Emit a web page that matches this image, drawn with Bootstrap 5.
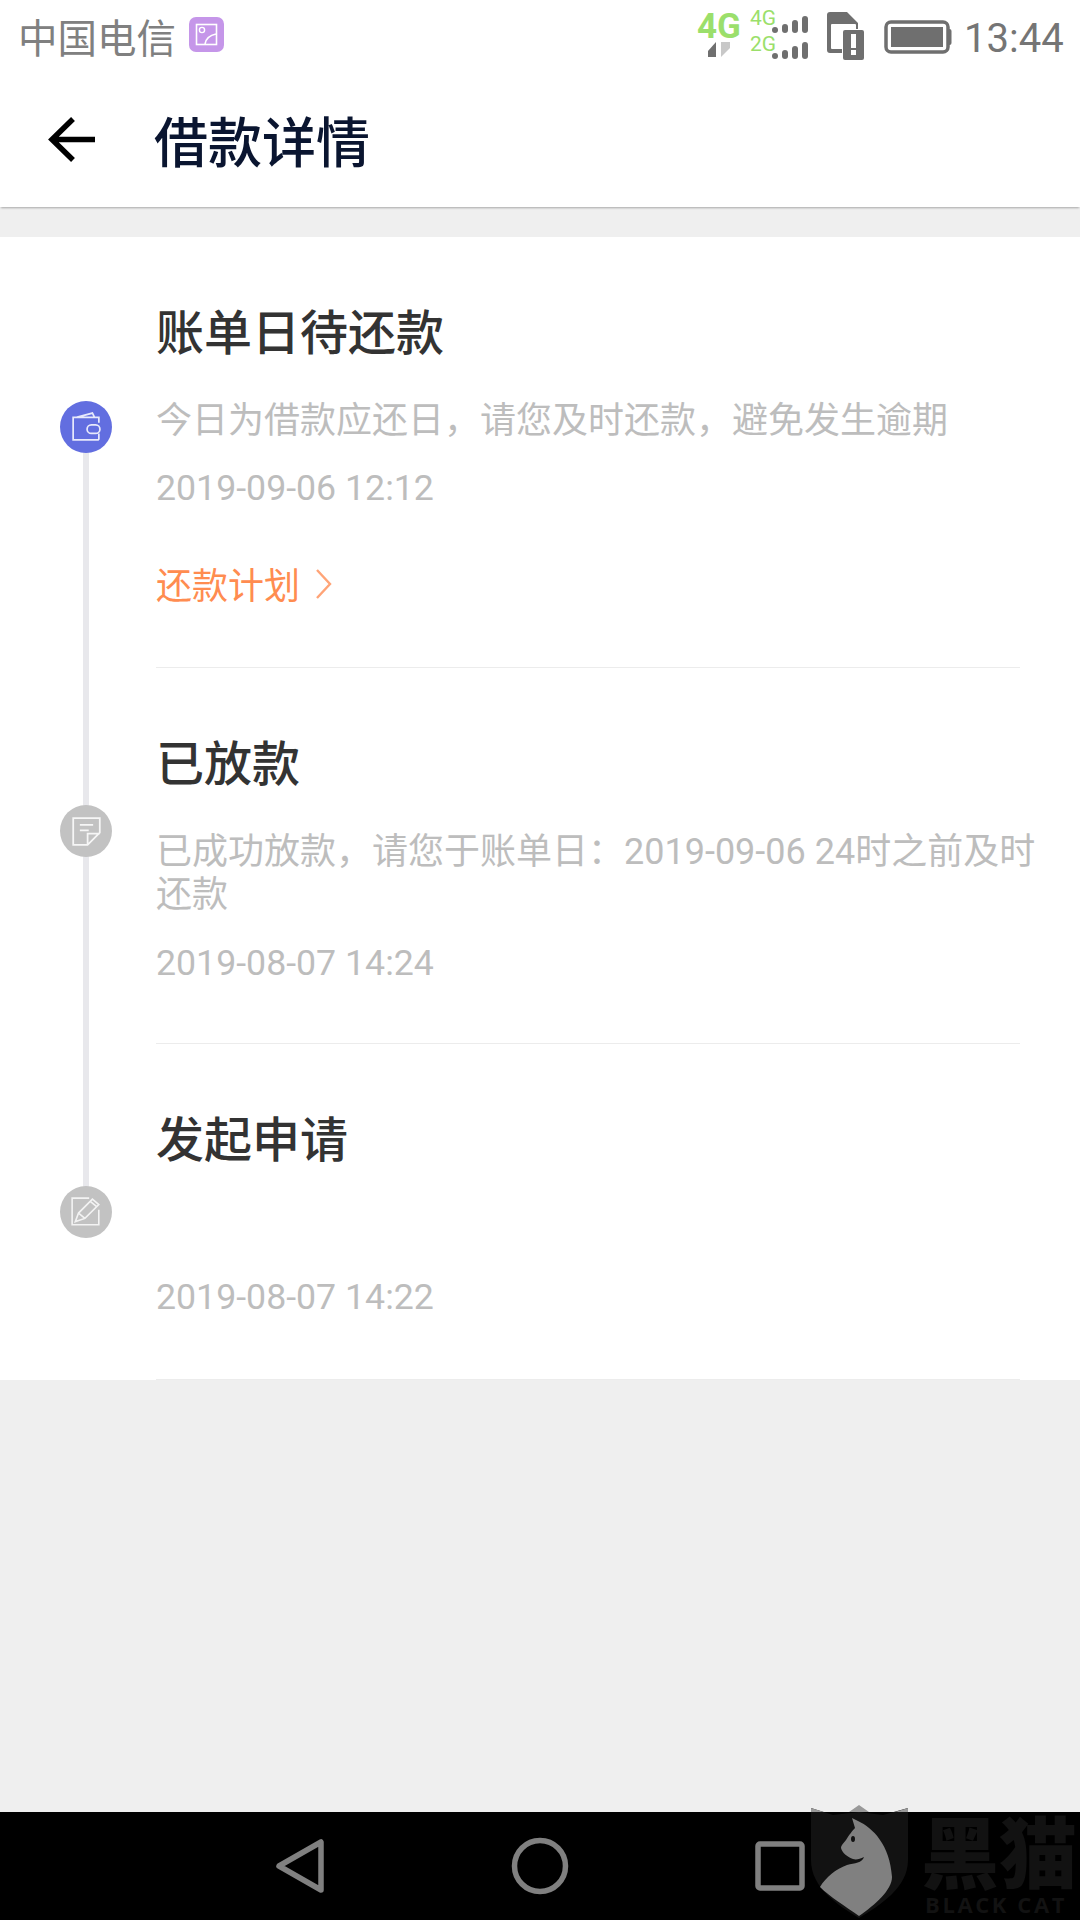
<!DOCTYPE html>
<html lang="zh-CN">
<head>
<meta charset="UTF-8">
<title>借款详情</title>
<link href="https://cdn.jsdelivr.net/npm/bootstrap@5.3.0/dist/css/bootstrap.min.css" rel="stylesheet">
<style>
html, body { background: #efefef; }
body { font-family: "Noto Sans CJK SC", "Noto Sans", sans-serif; }
.phone { width: 1080px; height: 1920px; overflow: hidden; }
.status-bar { height: 72px; padding-left: 18px; color: #808080; font-size: 39.5px; line-height: 72px; }
.carrier-text { white-space: nowrap; }
.note-badge { width: 35px; height: 35px; margin-left: 13px; margin-bottom: 4px; }
.status-icons { width: 400px; height: 72px; }
.clock { font-family: Roboto, sans-serif; font-size: 40px; fill: #757575; }
.net-big { font-family: Roboto, sans-serif; font-weight: 700; font-size: 35px; fill: #9bdf6b; }
.net-small { font-family: Roboto, sans-serif; font-size: 21px; fill: #9bdf6b; }
.app-bar { height: 135px; box-shadow: 0 2px 2px -1px rgba(0,0,0,.3); position: relative; }
.back-icon { width: 48px; height: 48px; margin-left: 48px; }
.page-title { font-size: 54px; line-height: 70px; color: #0a1530; margin: 0 0 0 58px; font-weight: 500; }
.timeline-box { margin-top: 30px; }
.step-row { position: relative; }
.rail-col { width: 156px; flex: none; position: relative; }
.rail-line { position: absolute; left: 83px; width: 6px; background: #e8e8ec; }
.step-dot { position: absolute; left: 60px; width: 52px; height: 52px; border-radius: 50%; background: #c2c2c2; display: flex; align-items: center; justify-content: center; }
.step-dot.is-active { background: #626ee0; }
.step-body { flex: 1; margin-right: 60px; padding: 60px 0 62px; border-bottom: 1px solid #ececec; min-width: 0; }
.step-body.is-plain { padding-bottom: 58px; }
.step-body.is-last { padding-bottom: 60px; }
.step-title { font-size: 48px; line-height: 64px; color: #333; margin: 0 0 39px; font-weight: 500; }
.step-desc { font-family: Roboto, "Noto Sans CJK SC", sans-serif; font-size: 36px; line-height: 43px; color: #bdbdbd; margin: 0 -36px 24px 0; min-height: 43px; }
.is-plain .step-desc { margin-bottom: 25px; }
.is-last .step-desc { margin-bottom: 26px; }
.step-date { font-family: Roboto, sans-serif; font-size: 35.7px; line-height: 43px; color: #bdbdbd; }
.step-link { font-size: 36px; line-height: 43px; color: #ff8c50; margin-top: 52px; }
.step-link svg { margin-left: 15px; }
.nav-strip { height: 108px; background: #000; position: relative; }
.nav-svg { position: absolute; left: 0; top: 0; overflow: visible; }
.mark-cn { position: absolute; left: 921px; top: 4px; height: 66px; font-weight: 900; font-size: 78px; line-height: 66px; color: #121212; white-space: nowrap; }
.mark-en { position: absolute; left: 925px; top: 82px; height: 20px; font-family: "Open Sans", sans-serif; font-weight: 700; font-size: 22px; line-height: 20px; letter-spacing: 2.6px; color: #121212; white-space: nowrap; }
</style>
</head>
<body>
<div class="phone d-flex flex-column">

  <div class="status-bar bg-white d-flex align-items-center">
    <span class="carrier-text">中国电信</span>
    <svg class="note-badge" viewBox="0 0 35 35">
      <rect width="35" height="35" rx="7" fill="#c596e9"/>
      <rect x="7.5" y="7.5" width="20" height="20" fill="none" stroke="#fff" stroke-width="1.6"/>
      <circle cx="13" cy="13" r="2.6" fill="none" stroke="#fff" stroke-width="1.4"/>
      <path d="M16 27 C17 21 22 18 27 17" fill="none" stroke="#fff" stroke-width="1.6"/>
    </svg>
    <svg class="status-icons ms-auto flex-shrink-0" viewBox="680 0 400 72">
      <text class="net-big" x="697" y="38">4G</text>
      <path d="M716 42 V57 H708 V51 Z" fill="#6f6f6f"/>
      <path d="M721 42 V57 L730 48 V42 Z" fill="#c8c8c8"/>
      <text class="net-small" x="750" y="25">4G</text>
      <text class="net-small" x="750" y="51">2G</text>
      <g fill="#6f6f6f">
        <circle cx="775" cy="30" r="3"/><rect x="782" y="24" width="6" height="9" rx="3"/><rect x="792" y="20" width="6" height="13" rx="3"/><rect x="802" y="16" width="6" height="17" rx="3"/>
        <circle cx="775" cy="56" r="3"/><rect x="782" y="50" width="6" height="9" rx="3"/><rect x="792" y="46" width="6" height="13" rx="3"/><rect x="802" y="42" width="6" height="17" rx="3"/>
      </g>
      <path d="M830 12 H847 L858 23 V34 H846 V53 H830 A3 3 0 0 1 827 50 V15 A3 3 0 0 1 830 12 Z" fill="#6f6f6f"/>
      <rect x="831" y="24" width="25" height="25" rx="1" fill="#fff"/>
      <rect x="842" y="29" width="23" height="32" fill="#fff"/>
      <rect x="843" y="30" width="21" height="30" rx="2" fill="#6f6f6f"/>
      <rect x="851" y="34" width="5" height="14" fill="#fff"/>
      <rect x="851" y="50" width="5" height="5" fill="#fff"/>
      <rect x="886" y="22" width="62" height="30" rx="5" fill="none" stroke="#6f6f6f" stroke-width="3.5"/>
      <rect x="891" y="27" width="52" height="20" fill="#6f6f6f"/>
      <path d="M949 29 H949.5 A2 2 0 0 1 951.5 31 V43 A2 2 0 0 1 949.5 45 H949 Z" fill="#6f6f6f"/>
      <text class="clock" x="964" y="52">13:44</text>
    </svg>
  </div>

  <div class="app-bar bg-white d-flex align-items-center">
    <svg class="back-icon" viewBox="0 0 48 48">
      <path d="M47 23.5 H4 M25 3 L4 23.5 L25 44" fill="none" stroke="#000" stroke-width="5.5"/>
    </svg>
    <h1 class="page-title">借款详情</h1>
  </div>

  <div class="timeline-box bg-white">

    <div class="step-row d-flex">
      <div class="rail-col">
        <div class="rail-line" style="top:190px;bottom:0"></div>
        <div class="step-dot is-active" style="top:164px">
          <svg width="30" height="30" viewBox="0 0 28 28" fill="none" stroke="#fff" stroke-opacity=".85" stroke-width="1.6">
            <path d="M26 26 H2 V5 H26 V10 M5 5 L20 1 L22 5"/>
            <rect x="15" y="12" width="12" height="8" rx="4"/>
            <path d="M26 20 V26"/>
          </svg>
        </div>
      </div>
      <div class="step-body">
        <h2 class="step-title">账单日待还款</h2>
        <p class="step-desc">今日为借款应还日&#65292;请您及时还款&#65292;避免发生逾期</p>
        <div class="step-date">2019-09-06 12:12</div>
        <div class="step-link d-flex align-items-center">还款计划
          <svg width="17" height="32" viewBox="0 0 17 32"><path d="M2 2 L15 16 L2 30" fill="none" stroke="#ffa477" stroke-width="2.4"/></svg>
        </div>
      </div>
    </div>

    <div class="step-row d-flex">
      <div class="rail-col">
        <div class="rail-line" style="top:0;bottom:0"></div>
        <div class="step-dot" style="top:137px">
          <svg width="31" height="31" viewBox="0 0 28 28" fill="none" stroke="#fff" stroke-opacity=".85" stroke-width="1.6">
            <path d="M15 26 H2 V2 H26 V15 L15 26 Z M15 26 V16 H26"/>
            <path d="M8 8 H20 M8 13 H16"/>
          </svg>
        </div>
      </div>
      <div class="step-body is-plain">
        <h2 class="step-title">已放款</h2>
        <p class="step-desc">已成功放款&#65292;请您于账单日&#65306;2019-09-06 24时之前及时还款</p>
        <div class="step-date">2019-08-07 14:24</div>
      </div>
    </div>

    <div class="step-row d-flex">
      <div class="rail-col">
        <div class="rail-line" style="top:0;height:168px"></div>
        <div class="step-dot" style="top:142px">
          <svg width="32" height="32" viewBox="0 0 30 30" fill="none" stroke="#fff" stroke-opacity=".8" stroke-width="1.5">
            <path d="M27 13 V27 H2 V2 H18"/>
            <path d="M5 24 L8 16 L21 3 L27 8 L14 21 Z M8 16 L14 21 M19 5 L25 10"/>
          </svg>
        </div>
      </div>
      <div class="step-body is-last">
        <h2 class="step-title">发起申请</h2>
        <p class="step-desc"></p>
        <div class="step-date">2019-08-07 14:22</div>
      </div>
    </div>

  </div>

  <div class="flex-grow-1"></div>

  <div class="nav-strip">
    <svg class="nav-svg" width="1080" height="108" viewBox="0 1812 1080 108">
      <g fill="none" stroke="#808080" stroke-width="5.5" stroke-linejoin="round">
        <path d="M321 1842 V1890 L279 1866 Z"/>
        <circle cx="540" cy="1866" r="25.5"/>
        <rect x="758" y="1844" width="44" height="44" rx="2"/>
      </g>
      <path d="M811 1808 L833 1815 L859 1812 L883 1815 L908 1808 V1860 C908 1888 880 1905 859 1918 C838 1905 811 1888 811 1860 Z" fill="#121212"/>
      <path d="M811 1808 V1812 H824 Z M849 1812 L859 1805 L869 1812 Z M895 1812 L908 1808 V1812 Z" fill="#999"/>
      <path d="M852 1818 L858 1821 C873 1828 890 1845 892 1877 C892 1890 875 1905 859 1916 C845 1906 830 1897 820 1887 C826 1877 836 1869 847 1865 C855 1863 862 1863 864 1857 C860 1859 856 1860 853 1859 C848 1857 842 1853 841 1848 C841 1845 844 1843 846 1840 C849 1835 853 1830 855 1828 Z" fill="#808080"/>
      <ellipse cx="853" cy="1839" rx="2" ry="3" fill="#121212"/>
    </svg>
    <div class="mark-cn">黑猫</div>
    <div class="mark-en">BLACK CAT</div>
  </div>
</div>
<script src="https://cdn.jsdelivr.net/npm/bootstrap@5.3.0/dist/js/bootstrap.bundle.min.js"></script>
</body>
</html>
